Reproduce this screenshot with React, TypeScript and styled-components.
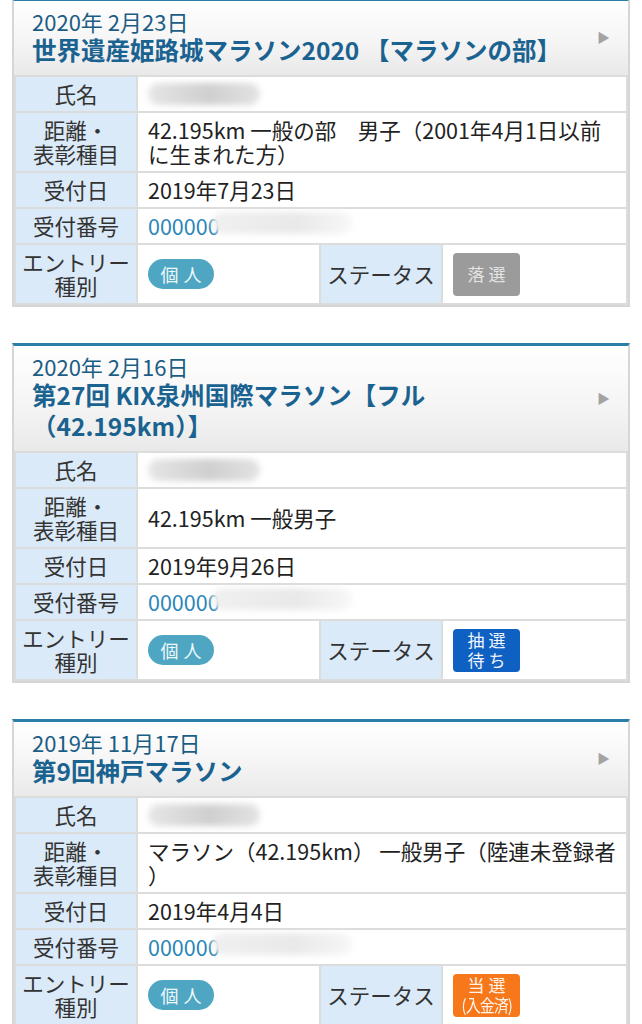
import React from 'react';
import styled, { createGlobalStyle } from 'styled-components';

const GlobalStyle = createGlobalStyle`
  html, body {
    margin: 0;
    padding: 0;
    background: #fff;
  }
  body {
    font-family: "Noto Sans CJK JP", "Noto Sans", sans-serif;
    color: #222;
  }
`;

const Page = styled.div`
  padding: 0 12px;
  display: flex;
  flex-direction: column;
  gap: 36px;
  margin-top: -2px;
`;

const Card = styled.section`
  border: 2px solid #d6d6d6;
  border-top: 3px solid #2b7ea8;
  background: #fff;
`;

const Header = styled.div`
  display: flex;
  align-items: center;
  padding: 7px 18px 10px 18px;
  background: linear-gradient(#ffffff 0%, #f6f6f6 50%, #e9e9e9 100%);
`;

const HeaderText = styled.div`
  flex: 1;
`;

const EventDate = styled.div`
  font-size: 22px;
  line-height: 26px;
  color: #1c5d85;
`;

const EventTitle = styled.div`
  font-size: 24.5px;
  line-height: 31px;
  font-weight: 700;
  color: #1a6290;
`;

const Arrow = styled.span`
  color: #a3a3a3;
  font-size: 13px;
  margin-left: 12px;
`;

const Table = styled.table`
  width: 100%;
  border-collapse: collapse;
  table-layout: fixed;
`;

const Th = styled.th`
  background: #dbeaf8;
  border: 2px solid #dcdcdc;
  font-weight: 400;
  font-size: 21.5px;
  line-height: 24px;
  color: #333;
  padding: 5px 2px;
  text-align: center;
  vertical-align: middle;
`;

const Td = styled.td<{ $loose?: boolean }>`
  border: 2px solid #dcdcdc;
  font-size: 21.5px;
  line-height: 24px;
  color: #222;
  padding: 5px 8px 5px 10px;
  vertical-align: middle;
  line-break: ${(p) => (p.$loose ? 'anywhere' : 'auto')};
`;

const NameBlur = styled.div`
  width: 112px;
  height: 22px;
  border-radius: 11px;
  background: linear-gradient(90deg, #e6e6e6, #cfcfcf 55%, #e3e3e3);
  filter: blur(3px);
`;

const Number = styled.span`
  position: relative;
  color: #2a86b6;
`;

const NumberBlur = styled.span`
  position: absolute;
  left: 64px;
  top: 2px;
  width: 140px;
  height: 22px;
  border-radius: 11px;
  background: linear-gradient(90deg, #f0f0f0, #e9e9e9 60%, #f7f7f7);
  filter: blur(3px);
`;

const Pill = styled.span`
  display: inline-flex;
  align-items: center;
  justify-content: center;
  width: 66px;
  height: 30px;
  border-radius: 15px;
  background: #4ea6c2;
  color: #eef8fb;
  font-size: 18px;
  letter-spacing: 5px;
  text-indent: 5px;
`;

const statusColors = {
  lost: { bg: '#9b9b9b', fg: '#e4e4e4' },
  waiting: { bg: '#0e60c2', fg: '#f2f6fc' },
  won: { bg: '#f6781b', fg: '#fff3e8' },
};

type StatusKind = keyof typeof statusColors;

const Status = styled.div<{ $kind: StatusKind }>`
  display: flex;
  flex-direction: column;
  align-items: center;
  justify-content: center;
  width: 67px;
  height: 43px;
  border-radius: 4px;
  background: ${(p) => statusColors[p.$kind].bg};
  color: ${(p) => statusColors[p.$kind].fg};
  font-size: 17px;
  line-height: 20px;
  letter-spacing: 4px;
  text-indent: 4px;
`;

const StatusSmall = styled.span`
  display: inline-block;
  font-size: 17px;
  letter-spacing: -1px;
  text-indent: 0;
  transform: scaleX(0.88);
`;

interface Entry {
  date: string;
  title: string;
  distance: string;
  received: string;
  status: StatusKind;
}

const entries: Entry[] = [
  {
    date: '2020年 2月23日',
    title: '世界遺産姫路城マラソン2020 【マラソンの部】',
    distance: '42.195km 一般の部　男子（2001年4月1日以前に生まれた方）',
    received: '2019年7月23日',
    status: 'lost',
  },
  {
    date: '2020年 2月16日',
    title: '第27回 KIX泉州国際マラソン【フル（42.195km）】',
    distance: '42.195km 一般男子',
    received: '2019年9月26日',
    status: 'waiting',
  },
  {
    date: '2019年 11月17日',
    title: '第9回神戸マラソン',
    distance: 'マラソン（42.195km） 一般男子（陸連未登録者）',
    received: '2019年4月4日',
    status: 'won',
  },
];

const StatusBadge = ({ kind }: { kind: StatusKind }) => {
  if (kind === 'lost') return <Status $kind="lost">落選</Status>;
  if (kind === 'waiting')
    return (
      <Status $kind="waiting">
        <span>抽選</span>
        <span>待ち</span>
      </Status>
    );
  return (
    <Status $kind="won">
      <span>当選</span>
      <StatusSmall>(入金済)</StatusSmall>
    </Status>
  );
};

const EntryCard = ({ entry }: { entry: Entry }) => (
  <Card>
    <Header>
      <HeaderText>
        <EventDate>{entry.date}</EventDate>
        <EventTitle>{entry.title}</EventTitle>
      </HeaderText>
      <Arrow>▶</Arrow>
    </Header>
    <Table>
      <colgroup>
        <col style={{ width: 122 }} />
        <col style={{ width: 183 }} />
        <col style={{ width: 122 }} />
        <col />
      </colgroup>
      <tbody>
        <tr>
          <Th>氏名</Th>
          <Td colSpan={3}>
            <NameBlur />
          </Td>
        </tr>
        <tr>
          <Th>
            距離・
            <br />
            表彰種目
          </Th>
          <Td colSpan={3} $loose>
            {entry.distance}
          </Td>
        </tr>
        <tr>
          <Th>受付日</Th>
          <Td colSpan={3}>{entry.received}</Td>
        </tr>
        <tr>
          <Th>受付番号</Th>
          <Td colSpan={3}>
            <Number>
              000000
              <NumberBlur />
            </Number>
          </Td>
        </tr>
        <tr>
          <Th>
            エントリー
            <br />
            種別
          </Th>
          <Td>
            <Pill>個人</Pill>
          </Td>
          <Th>ステータス</Th>
          <Td>
            <StatusBadge kind={entry.status} />
          </Td>
        </tr>
      </tbody>
    </Table>
  </Card>
);

export default function App() {
  return (
    <>
      <GlobalStyle />
      <Page>
        {entries.map((e) => (
          <EntryCard key={e.date} entry={e} />
        ))}
      </Page>
    </>
  );
}
